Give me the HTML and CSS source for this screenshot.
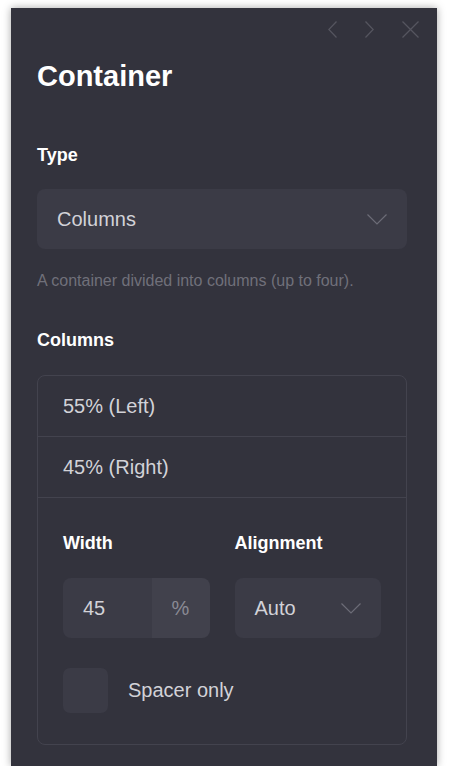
FILE: index.html
```html
<!DOCTYPE html>
<html lang="en">
<head>
  <meta charset="UTF-8" />
  <title>Container settings</title>
  <link rel="stylesheet" href="styles.css">
</head>
<body>

  <div class="panel">
    <div class="panel-nav">
      <svg class="nav-icon" width="9" height="17" viewBox="0 0 9 17"><path d="M8.5 0.5 L0.8 8.5 L8.5 16.5" /></svg>
      <svg class="nav-icon" width="9" height="17" viewBox="0 0 9 17"><path d="M0.5 0.5 L8.2 8.5 L0.5 16.5" /></svg>
      <svg class="nav-icon" width="17" height="17" viewBox="0 0 17 17"><path d="M0.5 0.5 L16.5 16.5 M16.5 0.5 L0.5 16.5" /></svg>
    </div>

    <h1 class="panel-title">Container</h1>

    <div class="label label-type">Type</div>
    <div class="select">
      <span>Columns</span>
      <svg class="chevron" width="20" height="11" viewBox="0 0 20 11"><path d="M0.5 0.5 L10 10 L19.5 0.5" /></svg>
    </div>
    <p class="help">A container divided into columns (up to four).</p>

    <div class="label label-columns">Columns</div>
    <div class="columns-box">
      <div class="column-row">55% (Left)</div>
      <div class="column-row">45% (Right)</div>
      <div class="column-edit">
        <div class="edit-grid">
          <div class="field">
            <div class="label">Width</div>
            <div class="number-input">
              <span class="number-value">45</span>
              <span class="number-suffix">%</span>
            </div>
          </div>
          <div class="field">
            <div class="label">Alignment</div>
            <div class="select">
              <span>Auto</span>
              <svg class="chevron" width="20" height="11" viewBox="0 0 20 11"><path d="M0.5 0.5 L10 10 L19.5 0.5" /></svg>
            </div>
          </div>
        </div>
        <label class="checkbox-row">
          <span class="checkbox"></span>
          <span>Spacer only</span>
        </label>
      </div>
    </div>
  </div>

</body>
</html>
```

FILE: styles.css
```css
body {
  margin: 0;
  background-color: #ffffff;
  font-family: "Liberation Sans", Arial, sans-serif;
}

.panel {
  box-sizing: border-box;
  width: 426px;
  height: 758px;
  margin: 8px 0 0 11px;
  padding: 0 30px 0 26px;
  background-color: #33333d;
  box-shadow: 0 0 8px rgba(0, 0, 0, 0.35);
  display: flex;
  flex-direction: column;
}

.panel-nav {
  display: flex;
  justify-content: flex-end;
  align-items: center;
  gap: 28px;
  height: 17px;
  margin: 13px -12px 0 0;
}

.nav-icon path {
  fill: none;
  stroke: #55555f;
  stroke-width: 1.3;
}

.panel-title {
  margin: 21px 0 0 0;
  font-size: 29px;
  line-height: 34px;
  font-weight: bold;
  color: #ffffff;
}

.label {
  font-size: 18px;
  line-height: 22px;
  font-weight: bold;
  color: #ffffff;
}

.label-type {
  margin-top: 51px;
}

.select {
  box-sizing: border-box;
  height: 60px;
  padding: 0 20px;
  border-radius: 8px;
  background-color: #3b3b46;
  display: flex;
  align-items: center;
  justify-content: space-between;
  font-size: 20px;
  color: #d2d2d8;
}

.panel > .select {
  margin-top: 23px;
}

.chevron path {
  fill: none;
  stroke: #6c6c77;
  stroke-width: 1.2;
}

.help {
  margin: 22px 0 0 0;
  font-size: 16px;
  line-height: 20px;
  color: #70707a;
}

.label-columns {
  margin-top: 38px;
}

.columns-box {
  margin-top: 24px;
  border: 1px solid #43434e;
  border-radius: 8px;
}

.column-row {
  height: 60px;
  padding: 0 25px;
  border-bottom: 1px solid #43434e;
  display: flex;
  align-items: center;
  font-size: 20px;
  color: #d2d2d8;
}

.column-edit {
  padding: 34px 25px 31px 25px;
}

.edit-grid {
  display: grid;
  grid-template-columns: 1fr 1fr;
  gap: 25px;
}

.field .label {
  margin-bottom: 24px;
}

.number-input {
  height: 60px;
  display: flex;
  border-radius: 8px;
  overflow: hidden;
  font-size: 20px;
}

.number-value {
  flex: 1;
  padding-left: 20px;
  display: flex;
  align-items: center;
  background-color: #3b3b46;
  color: #d2d2d8;
}

.number-suffix {
  width: 58px;
  display: flex;
  align-items: center;
  justify-content: center;
  background-color: #41414c;
  color: #8a8a94;
}

.checkbox-row {
  margin-top: 30px;
  display: flex;
  align-items: center;
  gap: 20px;
  font-size: 20px;
  color: #d2d2d8;
}

.checkbox {
  width: 45px;
  height: 45px;
  border-radius: 7px;
  background-color: #3b3b46;
}
```
